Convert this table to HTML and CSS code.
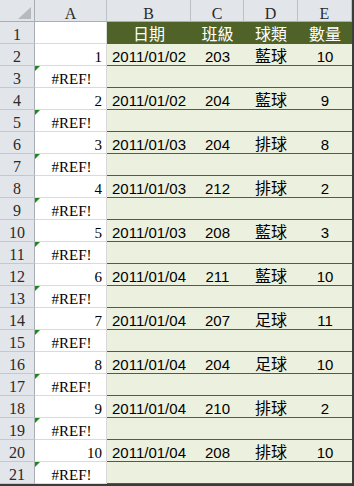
FILE: index.html
```html
<!DOCTYPE html>
<html lang="zh-Hant">
<head>
<meta charset="utf-8">
<title>Sheet</title>
<link rel="stylesheet" href="styles.css">
</head>
<body>
<div class="sheet">
  <div class="corner"><span class="tri"></span></div>
  <div class="colhead">A</div>
  <div class="colhead">B</div>
  <div class="colhead">C</div>
  <div class="colhead">D</div>
  <div class="colhead">E</div>

  <div class="rowhead">1</div>
  <div class="a"></div>
  <div class="g zh">日期</div>
  <div class="g zh">班級</div>
  <div class="g zh">球類</div>
  <div class="g zh">數量</div>

  <div class="rowhead">2</div><div class="a num">1</div><div class="d">2011/01/02</div><div class="d">203</div><div class="d zh">藍球</div><div class="d">10</div>
  <div class="rowhead">3</div><div class="a err">#REF!</div><div class="d"></div><div class="d"></div><div class="d"></div><div class="d"></div>
  <div class="rowhead">4</div><div class="a num">2</div><div class="d">2011/01/02</div><div class="d">204</div><div class="d zh">藍球</div><div class="d">9</div>
  <div class="rowhead">5</div><div class="a err">#REF!</div><div class="d"></div><div class="d"></div><div class="d"></div><div class="d"></div>
  <div class="rowhead">6</div><div class="a num">3</div><div class="d">2011/01/03</div><div class="d">204</div><div class="d zh">排球</div><div class="d">8</div>
  <div class="rowhead">7</div><div class="a err">#REF!</div><div class="d"></div><div class="d"></div><div class="d"></div><div class="d"></div>
  <div class="rowhead">8</div><div class="a num">4</div><div class="d">2011/01/03</div><div class="d">212</div><div class="d zh">排球</div><div class="d">2</div>
  <div class="rowhead">9</div><div class="a err">#REF!</div><div class="d"></div><div class="d"></div><div class="d"></div><div class="d"></div>
  <div class="rowhead">10</div><div class="a num">5</div><div class="d">2011/01/03</div><div class="d">208</div><div class="d zh">藍球</div><div class="d">3</div>
  <div class="rowhead">11</div><div class="a err">#REF!</div><div class="d"></div><div class="d"></div><div class="d"></div><div class="d"></div>
  <div class="rowhead">12</div><div class="a num">6</div><div class="d">2011/01/04</div><div class="d">211</div><div class="d zh">藍球</div><div class="d">10</div>
  <div class="rowhead">13</div><div class="a err">#REF!</div><div class="d"></div><div class="d"></div><div class="d"></div><div class="d"></div>
  <div class="rowhead">14</div><div class="a num">7</div><div class="d">2011/01/04</div><div class="d">207</div><div class="d zh">足球</div><div class="d">11</div>
  <div class="rowhead">15</div><div class="a err">#REF!</div><div class="d"></div><div class="d"></div><div class="d"></div><div class="d"></div>
  <div class="rowhead">16</div><div class="a num">8</div><div class="d">2011/01/04</div><div class="d">204</div><div class="d zh">足球</div><div class="d">10</div>
  <div class="rowhead">17</div><div class="a err">#REF!</div><div class="d"></div><div class="d"></div><div class="d"></div><div class="d"></div>
  <div class="rowhead">18</div><div class="a num">9</div><div class="d">2011/01/04</div><div class="d">210</div><div class="d zh">排球</div><div class="d">2</div>
  <div class="rowhead">19</div><div class="a err">#REF!</div><div class="d"></div><div class="d"></div><div class="d"></div><div class="d"></div>
  <div class="rowhead">20</div><div class="a num">10</div><div class="d">2011/01/04</div><div class="d">208</div><div class="d zh">排球</div><div class="d">10</div>
  <div class="rowhead">21</div><div class="a err">#REF!</div><div class="d"></div><div class="d"></div><div class="d"></div><div class="d"></div>
</div>
</body>
</html>
```

FILE: styles.css
```css
html, body {
  margin: 0;
  padding: 0;
  background: #ffffff;
}

.sheet {
  display: grid;
  grid-template-columns: 35px 72px 84px 53px 54px 54px;
  grid-auto-rows: 22px;
  width: 352px;
  border-right: 2px solid #3c3c3c;
  border-bottom: 2px solid #3c3c3c;
}

.sheet > div {
  box-sizing: border-box;
  white-space: nowrap;
}

.corner {
  background: #e2e5ea;
  border-right: 1px solid #a9aeb6;
  border-bottom: 1px solid #a9aeb6;
  display: flex;
  justify-content: flex-end;
  align-items: flex-end;
  padding: 0 3px 2px 0;
}

.tri {
  width: 13px;
  height: 12px;
  background: #b5bac1;
  clip-path: polygon(100% 0, 100% 100%, 0 100%);
}

.colhead {
  background: #e2e5ea;
  border-right: 1px solid #bcc1c8;
  border-bottom: 1px solid #a9aeb6;
  font-family: "Liberation Serif", serif;
  font-size: 16px;
  line-height: 17px;
  padding-top: 5px;
  color: #2a2a2a;
  text-align: center;
}

.rowhead {
  background: #e2e5ea;
  border-right: 1px solid #a9aeb6;
  border-bottom: 1px solid #c4c8ce;
  font-family: "Liberation Serif", serif;
  font-size: 16px;
  line-height: 17px;
  padding-top: 4px;
  color: #2a2a2a;
  text-align: center;
}

.a {
  position: relative;
  background: #ffffff;
  border-right: 1px solid #dadada;
  border-bottom: 1px solid #dadada;
  font-family: "Liberation Serif", serif;
  font-size: 15px;
  line-height: 17px;
  padding-top: 5px;
  color: #000000;
}

.num {
  text-align: right;
  padding-right: 4px;
}

.err {
  text-align: center;
  padding-left: 2px;
}

.err::before {
  content: "";
  position: absolute;
  left: 0;
  top: 0;
  width: 5px;
  height: 5px;
  background: #1a8a1a;
  clip-path: polygon(0 0, 100% 0, 0 100%);
}

.g {
  background: #4f6228;
  border-bottom: 1px solid #4f6228;
  color: #ffffff;
  font-family: "Liberation Sans", "Noto Sans CJK TC", sans-serif;
  font-size: 15px;
  line-height: 17px;
  padding-top: 4px;
  text-align: center;
}

.d {
  background: #ebf1de;
  border-bottom: 1px solid #4f6228;
  color: #000000;
  font-family: "Liberation Sans", "Noto Sans CJK TC", sans-serif;
  font-size: 15px;
  line-height: 17px;
  padding-top: 4px;
  text-align: center;
}

.zh {
  font-family: "Noto Sans CJK TC", sans-serif;
  font-size: 16px;
  line-height: 17px;
  padding-top: 3px;
}
```
